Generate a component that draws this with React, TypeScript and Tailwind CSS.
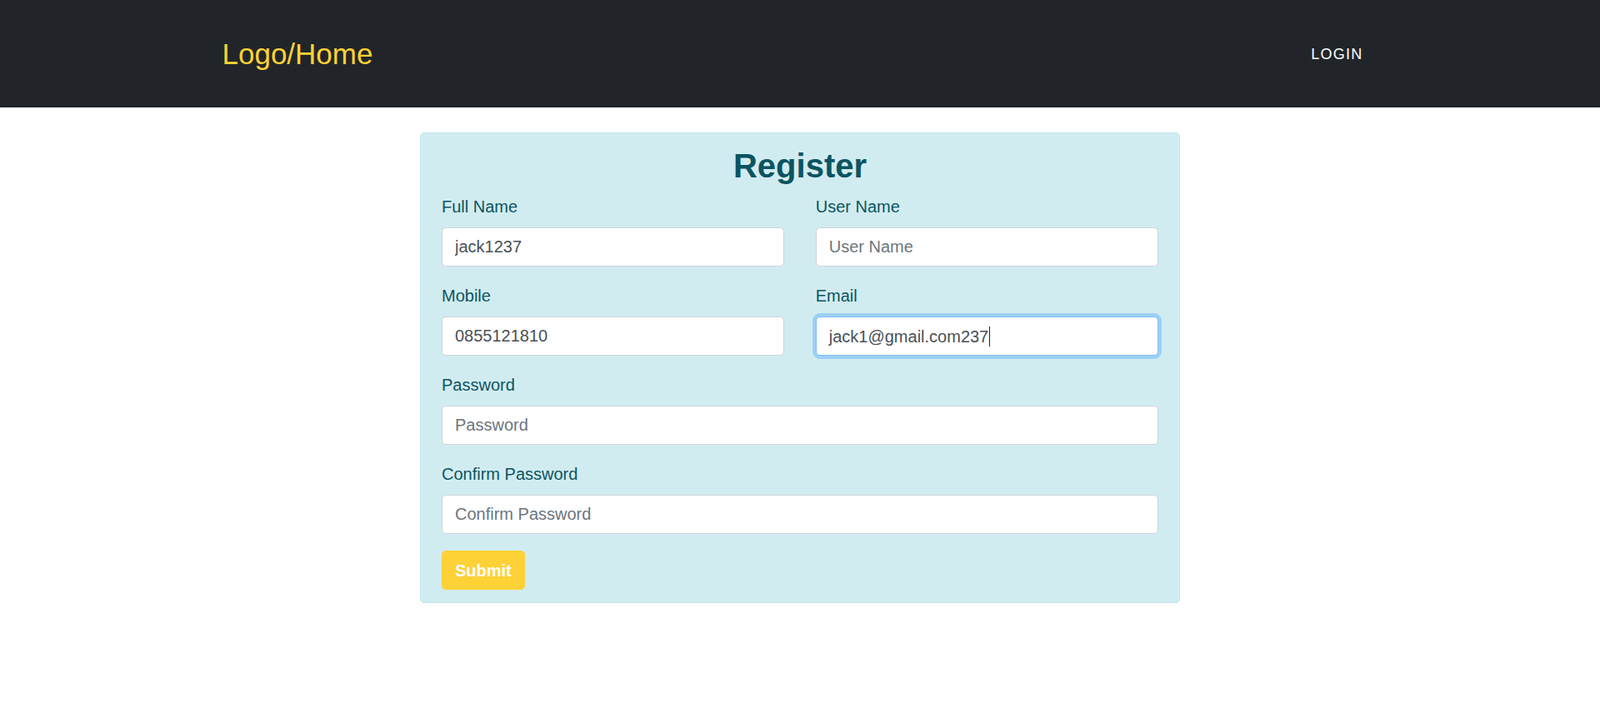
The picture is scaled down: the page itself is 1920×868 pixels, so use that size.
import React from "react";

const inputCls =
  "block h-[47px] w-full rounded-[5px] border border-[#ced4da] bg-white px-[15px] text-[20px] leading-[30px] text-[#495057] outline-none placeholder:text-[#6c757d]";

function Field({
  label,
  value,
  placeholder,
  type = "text",
  wide = false,
}: {
  label: string;
  value?: string;
  placeholder: string;
  type?: string;
  wide?: boolean;
}) {
  return (
    <div className={wide ? "col-span-2" : ""}>
      <label className="mb-[10px] block text-[20px] leading-[30px]">{label}</label>
      <input
        type={type}
        className={inputCls}
        placeholder={placeholder}
        defaultValue={value}
      />
    </div>
  );
}

export default function App() {
  return (
    <div className="min-h-screen bg-white font-['Liberation_Sans',Arial,sans-serif]">
      <nav className="h-[129px] bg-[#212529]">
        <div className="mx-auto flex h-full w-[1425px] items-center justify-between px-[19px]">
          <a href="#" className="text-[35px] leading-none text-[#fed136]">
            Logo/Home
          </a>
          <a
            href="#"
            className="pr-[18px] text-[18px] uppercase leading-none tracking-[1.25px] text-white"
          >
            Login
          </a>
        </div>
      </nav>

      <div className="mx-auto mt-[30px] w-[912px] rounded-[5px] border border-[#bee5eb] bg-[#d1ecf1] px-[25px] pb-[15px] pt-[15px] text-[#0c5460]">
        <h1 className="mb-[10px] text-center text-[40px] font-bold leading-[48px]">
          Register
        </h1>
        <div className="grid grid-cols-2 gap-x-[37.5px] gap-y-[20px]">
          <Field label="Full Name" value="jack1237" placeholder="Full Name" />
          <Field label="User Name" placeholder="User Name" />
          <Field label="Mobile" value="0855121810" placeholder="Mobile" />
          <div>
            <label className="mb-[10px] block text-[20px] leading-[30px]">Email</label>
            <div className="flex h-[47px] w-full items-center rounded-[5px] border border-[#80bdff] bg-white px-[15px] text-[20px] leading-[30px] text-[#495057] shadow-[0_0_0_4px_rgba(0,123,255,0.25)]">
              <span>jack1@gmail.com237</span>
              <span className="ml-px inline-block h-[24px] w-px bg-[#222]" />
            </div>
          </div>
          <Field label="Password" placeholder="Password" type="password" wide />
          <Field
            label="Confirm Password"
            placeholder="Confirm Password"
            type="password"
            wide
          />
        </div>
        <button
          type="button"
          className="mt-[20px] h-[47px] rounded-[5px] border border-[#fed136] bg-[#fed136] px-[15px] text-[20px] font-bold leading-[30px] text-white"
        >
          Submit
        </button>
      </div>
    </div>
  );
}
